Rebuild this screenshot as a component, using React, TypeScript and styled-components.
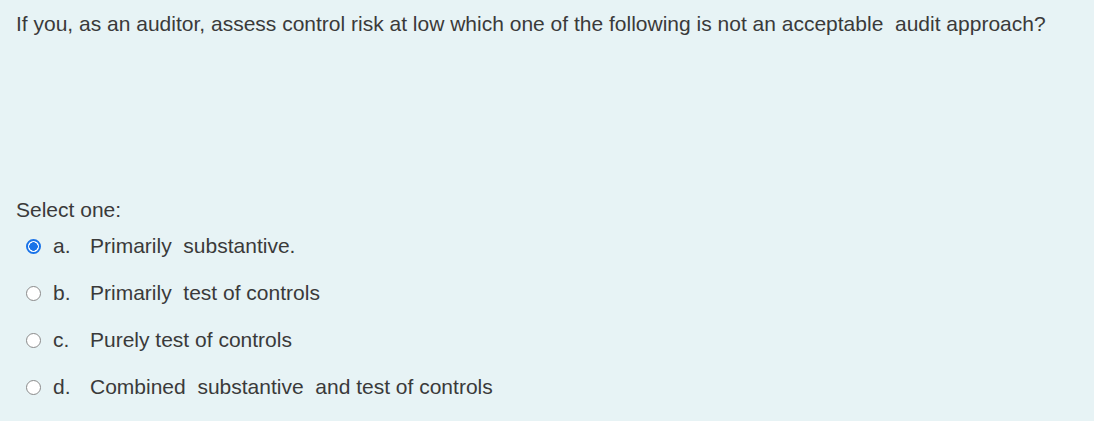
import React from "react";
import styled, { createGlobalStyle } from "styled-components";

const Global = createGlobalStyle`
  html, body { margin: 0; padding: 0; background: #e7f3f5; }
  body { font-family: "Liberation Sans", Arial, sans-serif; color: #3a3a3a; }
`;

const Page = styled.div`
  width: 1094px;
  height: 421px;
  box-sizing: border-box;
  padding: 11px 16px 0 16px;
  background: #e7f3f5;
  display: flex;
  flex-direction: column;
`;

const QText = styled.p`
  margin: 0;
  font-size: 21px;
  line-height: 25px;
  white-space: pre;
  height: 187px;
`;

const Prompt = styled.div`
  font-size: 21px;
  line-height: 24px;
`;

const Answers = styled.div`
  display: flex;
  flex-direction: column;
  padding-left: 10px;
  margin-top: 12px;
  gap: 23px;
`;

const Option = styled.label`
  display: flex;
  align-items: center;
  height: 24px;
  font-size: 21px;
  white-space: pre;
`;

const Radio = styled.span<{ $checked?: boolean }>`
  width: 15px;
  height: 15px;
  box-sizing: border-box;
  border-radius: 50%;
  border: ${(p) => (p.$checked ? "2px solid #1a73e8" : "1px solid #8a8a8a")};
  background: ${(p) =>
    p.$checked
      ? "radial-gradient(circle, #1a73e8 0 4px, #ffffff 4.5px)"
      : "#ffffff"};
  margin-right: 12px;
  flex: none;
`;

const Letter = styled.span`
  width: 37px;
  flex: none;
`;

const options = [
  { l: "a.", t: "Primarily  substantive.", c: true },
  { l: "b.", t: "Primarily  test of controls", c: false },
  { l: "c.", t: "Purely test of controls", c: false },
  { l: "d.", t: "Combined  substantive  and test of controls", c: false },
];

export default function App() {
  return (
    <>
      <Global />
      <Page>
        <QText>
          If you, as an auditor, assess control risk at low which one of the following is not an acceptable  audit approach?
        </QText>
        <Prompt>Select one:</Prompt>
        <Answers>
          {options.map((o) => (
            <Option key={o.l}>
              <Radio $checked={o.c} />
              <Letter>{o.l}</Letter>
              {o.t}
            </Option>
          ))}
        </Answers>
      </Page>
    </>
  );
}
